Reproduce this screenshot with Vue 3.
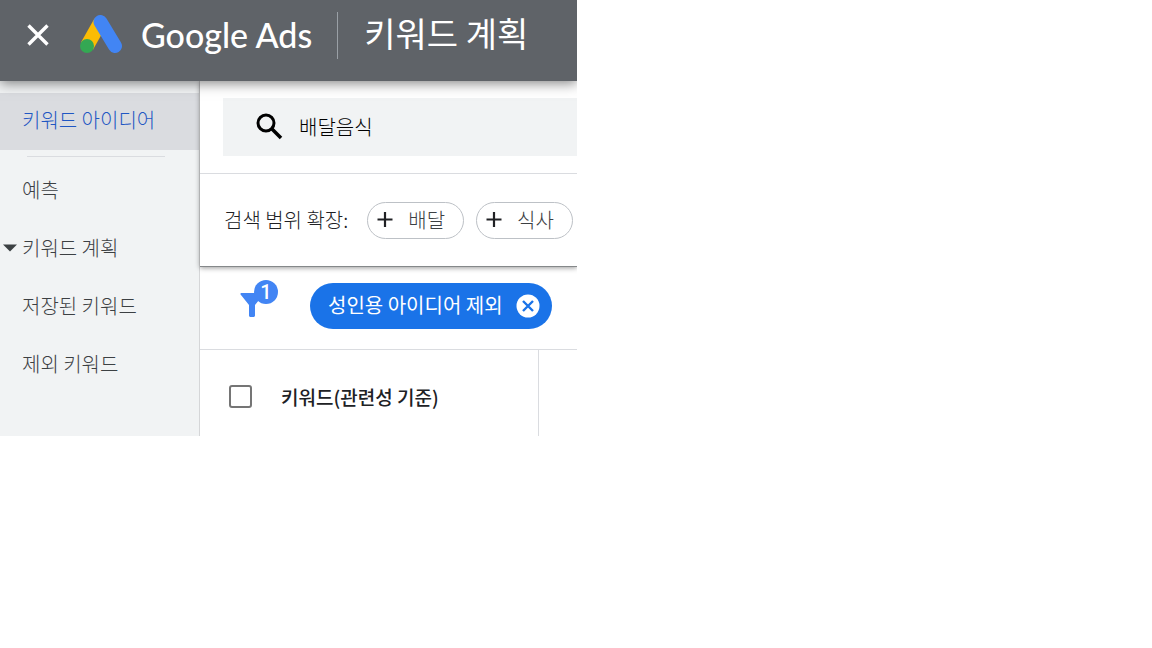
<script setup>
import { ref } from 'vue'

const query = ref('배달음식')
const planOpen = ref(true)
const allSelected = ref(false)
const suggestions = ['배달', '식사']
</script>

<template>
  <div class="app">
    <header class="topbar">
      <button class="close" type="button" aria-label="닫기">
        <svg width="22" height="22" viewBox="0 0 22 22">
          <path d="M1.5 1.5 20.5 20.5M20.5 1.5 1.5 20.5" fill="none" stroke="#fff" stroke-width="3.4" />
        </svg>
      </button>
      <a class="brand" href="#">
        <svg width="44" height="40" viewBox="0 0 44 40" aria-hidden="true">
          <path d="M21.5 7 8 31" stroke="#fbbc04" stroke-width="14" />
          <path d="M21.5 7 36 31" stroke="#4285f4" stroke-width="14" stroke-linecap="round" />
          <circle cx="8" cy="31" r="7" fill="#34a853" />
        </svg>
        <span class="wordmark">Google Ads</span>
      </a>
      <h1 class="title">키워드 계획</h1>
    </header>

    <div class="body">
      <nav class="sidebar">
        <a class="item active" href="#">키워드 아이디어</a>
        <hr class="divider" />
        <a class="item" href="#">예측</a>
        <button class="item group" type="button" :aria-expanded="planOpen" @click="planOpen = !planOpen">
          <svg class="caret" width="14" height="8" viewBox="0 0 14 8" aria-hidden="true">
            <path d="M0 0.5h14L7 7.5z" fill="#3c4043" />
          </svg>
          키워드 계획
        </button>
        <a v-if="planOpen" class="item" href="#">저장된 키워드</a>
        <a v-if="planOpen" class="item" href="#">제외 키워드</a>
      </nav>

      <main class="main">
        <section class="search-card">
          <div class="search-row">
            <label class="search">
              <svg width="28" height="28" viewBox="0 0 28 28" role="img" aria-label="검색">
                <circle cx="10" cy="10" r="8" fill="none" stroke="#000" stroke-width="3" />
                <path d="M16 16 25 25" stroke="#000" stroke-width="3.6" />
              </svg>
              <input v-model="query" type="text" />
            </label>
          </div>
          <div class="expand-row">
            <span class="expand-label">검색 범위 확장:</span>
            <button v-for="word in suggestions" :key="word" class="chip" type="button">
              <svg width="16" height="16" viewBox="0 0 16 16" aria-hidden="true">
                <path d="M8 0v15M0.5 7.5h15" stroke="#202124" stroke-width="2.2" />
              </svg>
              {{ word }}
            </button>
          </div>
        </section>

        <section class="filters">
          <button class="filter" type="button" aria-label="필터">
            <svg width="24" height="24" viewBox="0 0 24 24" aria-hidden="true">
              <path d="M1.5 0h21c1 0 1.4 1 .7 1.8L15 12v10.500c0 .8-.7 1.500-1.500 1.500h-3C9.700 24 9 23.300 9 22.500V12L.8 1.800C.1 1 .5 0 1.500 0z" fill="#4285f4" />
            </svg>
            <span class="badge">1</span>
          </button>
          <button class="applied" type="button">
            <span class="applied-label">성인용 아이디어 제외</span>
            <svg width="24" height="24" viewBox="0 0 24 24" aria-hidden="true">
              <circle cx="12" cy="12" r="11.500" fill="#fff" />
              <path d="M7 7 17 17M17 7 7 17" stroke="#1a73e8" stroke-width="2.400" />
            </svg>
          </button>
        </section>

        <table class="keywords">
          <thead>
            <tr>
              <th class="check">
                <input v-model="allSelected" type="checkbox" aria-label="모두 선택" />
              </th>
              <th class="name" scope="col">키워드(관련성 기준)</th>
              <td></td>
            </tr>
          </thead>
        </table>
      </main>
    </div>
  </div>
</template>

<style>
body {
  background: #fff;
}
</style>

<style scoped>
.app {
  width: 100%;
  max-width: 577px;
  overflow: hidden;
  font-family: "Noto Sans CJK KR", sans-serif;
  font-size: 20px;
  font-weight: 300;
  line-height: 28px;
  color: #202124;
}
.app *,
.app {
  box-sizing: border-box;
}
button,
input {
  font: inherit;
  color: inherit;
  margin: 0;
  padding: 0;
  border: 0;
  background: none;
}
button {
  cursor: pointer;
}
svg {
  display: block;
  flex: none;
}
a {
  color: inherit;
  text-decoration: none;
}
.topbar {
  position: relative;
  z-index: 2;
  display: flex;
  align-items: center;
  padding: 12px 0 22px 27px;
  background: #5f6368;
  color: #fff;
  box-shadow: 0 2px 12px rgba(0, 0, 0, 0.5);
}
.close,
.brand {
  padding-bottom: 2px;
}
.brand {
  display: flex;
  align-items: center;
  gap: 18px;
  margin-left: 30px;
}
.wordmark {
  font-family: Lato, sans-serif;
  font-size: 34px;
  font-weight: 500;
  line-height: 40px;
  white-space: nowrap;
}
.title {
  margin: 0 0 0 25px;
  padding: 0 0 6px 26px;
  border-left: 1px solid #9aa0a6;
  font-size: 34px;
  font-weight: 400;
  line-height: 41px;
  white-space: nowrap;
}
.body {
  display: flex;
}
.sidebar {
  flex: none;
  width: 200px;
  padding: 12px 0 42px;
  border-right: 1px solid #d5d6d8;
  background: #f1f3f4;
}
.item {
  display: flex;
  align-items: center;
  width: 100%;
  height: 58px;
  padding-left: 22px;
  color: #3c4043;
}
.item.active {
  height: 57px;
  padding-bottom: 4px;
  background: #dadce0;
  color: #1f57c3;
}
.item.group {
  gap: 5px;
  padding-left: 3px;
}
.divider {
  margin: 6px 34px 4px 27px;
  border: 0;
  border-top: 1px solid #dadce0;
}
.main {
  flex: 1;
  min-width: 0;
}
.search-card {
  position: relative;
  z-index: 1;
  border-bottom: 1px solid #85888a;
  background: #fff;
  box-shadow: 0 1px 5px rgba(0, 0, 0, 0.4);
}
.search-row {
  padding: 17px 0 17px 23px;
  border-bottom: 1px solid #dadce0;
}
.search {
  display: flex;
  align-items: center;
  gap: 15px;
  height: 58px;
  padding-left: 33px;
  background: #f1f3f4;
}
.search input {
  flex: 1;
  min-width: 0;
  outline: 0;
  color: #000;
}
.expand-row {
  display: flex;
  align-items: center;
  padding: 28px 0 27px 24px;
}
.expand-label {
  margin-right: 19px;
  padding-bottom: 2px;
  white-space: nowrap;
}
.chip {
  display: flex;
  align-items: center;
  gap: 15px;
  height: 37px;
  margin-right: 12px;
  padding: 0 18px 2px 9px;
  border: 1px solid #bdc1c6;
  border-radius: 19px;
  color: #3c4043;
  white-space: nowrap;
}
.filters {
  display: flex;
  align-items: center;
  gap: 32px;
  padding: 16px 0 20px 40px;
  border-bottom: 1px solid #dadce0;
}
.filter {
  position: relative;
  width: 38px;
  padding-bottom: 3px;
}
.badge {
  position: absolute;
  top: -13px;
  right: 0;
  width: 24px;
  height: 24px;
  border-radius: 50%;
  background: #4285f4;
  color: #fff;
  font-family: Roboto, sans-serif;
  font-weight: 500;
  line-height: 24px;
  text-align: center;
}
.applied {
  display: flex;
  align-items: center;
  gap: 13px;
  height: 46px;
  padding: 0 12px 0 18px;
  border-radius: 23px;
  background: #1a73e8;
  color: #fff;
  font-weight: 400;
  white-space: nowrap;
}
.applied-label {
  padding-bottom: 2px;
}
.keywords {
  width: 100%;
  height: 86px;
  border-collapse: separate;
  border-spacing: 0;
  table-layout: fixed;
}
.keywords th,
.keywords td {
  padding: 7px 0 0 29px;
  text-align: left;
  vertical-align: middle;
}
.keywords .check {
  width: 81px;
}
.keywords .name {
  width: 258px;
  padding-left: 0;
  border-right: 1px solid #dadce0;
  font-size: 19px;
  font-weight: 500;
}
.check input {
  display: block;
  width: 23px;
  height: 23px;
  border: 2px solid #757575;
  border-radius: 3px;
  appearance: none;
}
.check input:checked {
  border-color: #1a73e8;
  background: #1a73e8;
}
</style>
